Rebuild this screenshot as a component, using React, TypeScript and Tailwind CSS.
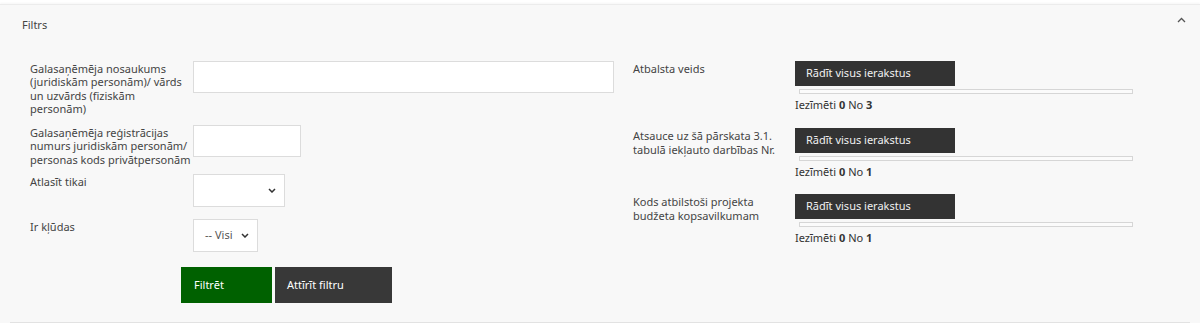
import React from "react";

const font = { fontFamily: '"Noto Sans", "Open Sans", Arial, sans-serif' };

function Multi({ label, total, h }: { label: string[]; total: number; h: string }) {
  return (
    <div className={`flex ${h}`}>
      <div className="w-[162px] shrink-0 text-[11px] leading-[13.5px] text-[#444] pt-[1px] pr-2">
        {label.map((l, i) => (
          <div key={i} className="whitespace-nowrap">{l}</div>
        ))}
      </div>
      <div className="flex flex-col">
        <div className="w-[160px] h-[25px] bg-[#333333] text-[#f0f0f0] text-[11px] flex items-center pl-[11px]">
          Rādīt visus ierakstus
        </div>
        <div className="ml-[4px] mt-[3px] w-[334px] h-[5px] border border-[#d6d6d6] bg-[#fbfbfb]"></div>
        <div className="mt-[4px] text-[11px] leading-[13px] text-[#333]">
          Iezīmēti <b>0</b> No <b>{total}</b>
        </div>
      </div>
    </div>
  );
}

function Chevron() {
  return (
    <svg width="9" height="6" viewBox="0 0 9 6" fill="none">
      <path d="M1 5 L4.5 1.5 L8 5" stroke="#555" strokeWidth="1.3" />
    </svg>
  );
}

function SelArrow() {
  return (
    <svg width="8" height="5" viewBox="0 0 8 5" fill="none">
      <path d="M1 1 L4 4 L7 1" stroke="#333" strokeWidth="1.5" />
    </svg>
  );
}

function Label({ lines }: { lines: string[] }) {
  return (
    <div className="w-[163px] shrink-0 text-[11px] leading-[13.3px] text-[#444] pt-[1px]">
      {lines.map((l, i) => (
        <div key={i} className="whitespace-nowrap">{l}</div>
      ))}
    </div>
  );
}

export default function App() {
  return (
    <div style={font} className="w-[1200px] h-[326px] bg-white overflow-hidden">
      <div className="h-[4px] bg-white"></div>
      <div className="bg-[#f8f8f8] border-t border-[#ececec] shadow-[0_-1px_2px_rgba(0,0,0,0.04)]">
        <div className="h-[38px] flex items-center justify-between pl-[22px] pr-[14px]">
          <span className="text-[11px] text-[#444] mt-[2px]">Filtrs</span>
          <span className="-mt-[8px]">
            <Chevron />
          </span>
        </div>
        <div className="flex pt-[18px] pl-[20px] pb-[19px] mx-[10px] border-b border-[#e2e2e2]">
          <div className="w-[603px] shrink-0 flex flex-col">
            <div className="flex h-[64px]">
              <Label
                lines={[
                  "Galasaņēmēja nosaukums",
                  "(juridiskām personām)/ vārds",
                  "un uzvārds (fiziskām",
                  "personām)",
                ]}
              />
              <div className="w-[421px] h-[32px] bg-white border border-[#dcdcdc]"></div>
            </div>
            <div className="flex h-[49px]">
              <Label
                lines={[
                  "Galasaņēmēja reģistrācijas",
                  "numurs juridiskām personām/",
                  "personas kods privātpersonām",
                ]}
              />
              <div className="w-[108px] h-[32px] bg-white border border-[#dcdcdc]"></div>
            </div>
            <div className="flex h-[45px]">
              <Label lines={["Atlasīt tikai"]} />
              <div className="w-[92px] h-[33px] bg-white border border-[#dcdcdc] flex items-center justify-end pr-[8px]">
                <SelArrow />
              </div>
            </div>
            <div className="flex h-[48px]">
              <Label lines={["Ir kļūdas"]} />
              <div className="w-[65px] h-[33px] bg-white border border-[#dcdcdc] flex items-center justify-between pl-[11px] pr-[8px] text-[11px] text-[#555]">
                <span>-- Visi</span>
                <SelArrow />
              </div>
            </div>
            <div className="flex ml-[151px] gap-[3px]">
              <div className="w-[91px] h-[36px] bg-[#006100] text-white text-[11px] flex items-center pl-[13px]">
                Filtrēt
              </div>
              <div className="w-[117px] h-[36px] bg-[#383838] text-white text-[11px] flex items-center pl-[12px]">
                Attīrīt filtru
              </div>
            </div>
          </div>
          <div className="flex flex-col">
            <Multi label={["Atbalsta veids"]} total={3} h="h-[67px]" />
            <Multi label={["Atsauce uz šā pārskata 3.1.", "tabulā iekļauto darbības Nr."]} total={1} h="h-[66px]" />
            <Multi label={["Kods atbilstoši projekta", "budžeta kopsavilkumam"]} total={1} h="h-[60px]" />
          </div>
        </div>
      </div>
    </div>
  );
}
